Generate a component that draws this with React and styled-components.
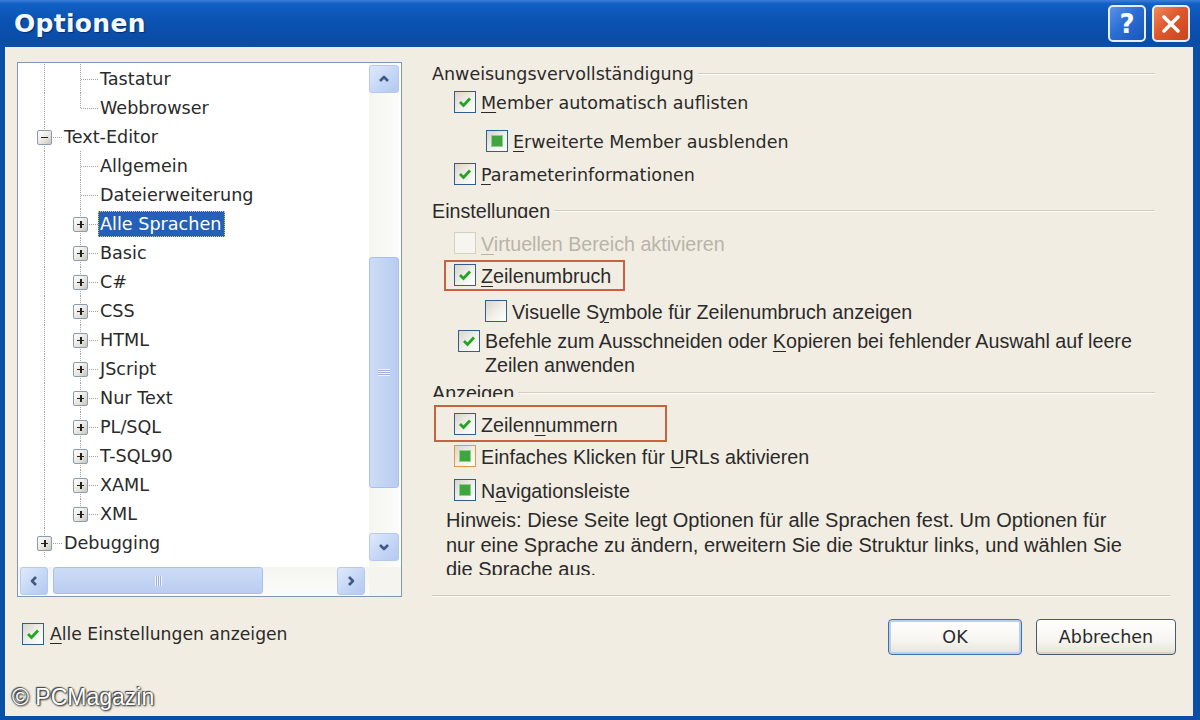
import React from "react";
import styled, { createGlobalStyle } from "styled-components";

const GlobalStyle = createGlobalStyle`
  html, body {
    margin: 0;
    padding: 0;
    width: 1200px;
    height: 720px;
    overflow: hidden;
  }
  * { box-sizing: border-box; }
`;

const WIDE = `"DejaVu Sans", Verdana, sans-serif`;
const NARROW = `"Liberation Sans", Arial, sans-serif`;

const Window = styled.div`
    position: relative;
    width: 1200px;
    height: 720px;
    display: flex;
    flex-direction: column;
    background: #0b4ea6;
    padding: 0 7px 4px 5px;
    color: #2a2a2a;
`;

const TitleBar = styled.div`
    height: 47px;
    margin: 0 -7px 0 -5px;
    display: flex;
    align-items: center;
    justify-content: space-between;
    padding: 0 10px 0 14px;
    background: linear-gradient(#3d7fd8 0%, #1160c4 8%, #0b52b2 45%, #0a4ca6 90%, #0d4fa6 100%);
`;

const TitleText = styled.div`
    font-family: ${WIDE};
    font-weight: bold;
    font-size: 25px;
    color: #f4f8ff;
    text-shadow: 1px 1px 1px #0a2c6a;
    letter-spacing: 0.3px;
`;

const CaptionButtons = styled.div`
    display: flex;
    gap: 6px;
`;

const CaptionButton = styled.div`
    width: 38px;
    height: 37px;
    border: 2px solid #e8eef8;
    border-radius: 5px;
    display: flex;
    align-items: center;
    justify-content: center;
    color: #fff;
    font-family: ${WIDE};
    font-weight: bold;
    font-size: 26px;
    background: ${p => p.$close
        ? "linear-gradient(135deg, #f08a5e 0%, #e0582d 45%, #c9431c 100%)"
        : "linear-gradient(135deg, #5b92e8 0%, #2a6fd6 45%, #1a55b8 100%)"};
`;

const Body = styled.div`
    flex: 1;
    background: #f2ede2;
    display: flex;
    flex-direction: column;
    padding: 15px 17px 0 12px;
`;

const MainRow = styled.div`
    display: flex;
    height: 535px;
`;

/* ---------- tree ---------- */

const TreeFrame = styled.div`
    width: 385px;
    height: 100%;
    border: 1px solid #8196b4;
    background: #fff;
    display: grid;
    grid-template-columns: 1fr 32px;
    grid-template-rows: 1fr 29px;
`;

const TreeList = styled.div`
    overflow: hidden;
    padding: 1px 0 0 8px;
    font-family: ${WIDE};
    font-size: 17.6px;
`;

const TreeRow = styled.div`
    height: 29px;
    display: flex;
    align-items: center;
`;

const GuideCell = styled.div`
    width: 36px;
    height: 100%;
    flex: none;
    position: relative;
    &::before {
        content: "";
        position: absolute;
        left: 18px;
        top: 0;
        bottom: 0;
        border-left: 1px dotted ${p => (p.$line ? "#a2a2a2" : "transparent")};
    }
`;

const BranchCell = styled.div`
    width: 36px;
    height: 100%;
    flex: none;
    position: relative;
    display: flex;
    align-items: center;
    &::before {
        content: "";
        position: absolute;
        left: 18px;
        top: 0;
        bottom: ${p => (p.$last ? "50%" : "0")};
        border-left: 1px dotted #a2a2a2;
    }
    &::after {
        content: "";
        position: absolute;
        left: 19px;
        right: 0;
        top: 50%;
        border-top: 1px dotted #a2a2a2;
    }
`;

const Expander = styled.span`
    position: absolute;
    z-index: 1;
    left: 11px;
    top: 50%;
    margin-top: -7px;
    width: 15px;
    height: 15px;
    border: 1px solid #8a9bb0;
    border-radius: 2px;
    background: linear-gradient(135deg, #ffffff 0%, #e6e4dc 60%, #c8c5b8 100%);
    &::before {
        content: "";
        position: absolute;
        left: 3px;
        right: 3px;
        top: 6px;
        height: 1.6px;
        background: #222;
    }
    &::after {
        content: "";
        display: ${p => (p.$open ? "none" : "block")};
        position: absolute;
        top: 3px;
        bottom: 3px;
        left: 6px;
        width: 1.6px;
        background: #222;
    }
`;

const TreeLabel = styled.span`
    height: 26px;
    line-height: 24px;
    padding: 0 3px 0 1px;
    white-space: nowrap;
    color: ${p => (p.$selected ? "#fff" : "#2a2a2a")};
    background: ${p => (p.$selected ? "#2560b8" : "transparent")};
    border: 1px dotted ${p => (p.$selected ? "#d9c27a" : "transparent")};
`;

const VScroll = styled.div`
    margin-right: 2px;
    display: flex;
    flex-direction: column;
    background: linear-gradient(90deg, #f4f4f0, #fcfcfa);
    padding-top: 2px;
`;

const HScroll = styled.div`
    display: flex;
    align-items: center;
    background: linear-gradient(#f4f4f0, #fcfcfa);
    padding: 0 0 2px 2px;
`;

const Corner = styled.div`
    background: #f6f4ee;
`;

const ScrollButton = styled.div`
    width: ${p => (p.$h ? "28px" : "30px")};
    height: 28px;
    flex: none;
    border: 1px solid #b6c8ec;
    border-radius: 3px;
    background: linear-gradient(135deg, #dfe9fb 0%, #c3d5f5 60%, #b4c9f0 100%);
    display: flex;
    align-items: center;
    justify-content: center;
    margin-left: ${p => (p.$end && p.$h ? "auto" : "0")};
    margin-right: ${p => (p.$end && p.$h ? "4px" : "0")};
    margin-top: ${p => (p.$end && !p.$h ? "auto" : "0")};
    margin-bottom: ${p => (p.$end && !p.$h ? "6px" : "0")};
`;

const Thumb = styled.div`
    flex: none;
    border: 1px solid #a9c0e8;
    border-radius: 3px;
    background: ${p => (p.$h
        ? "linear-gradient(#cddcf6, #b9cdf0)"
        : "linear-gradient(90deg, #cddcf6, #b9cdf0)")};
    display: flex;
    align-items: center;
    justify-content: center;
`;

const Grip = styled.span`
    display: block;
    width: ${p => (p.$h ? "7px" : "12px")};
    height: ${p => (p.$h ? "10px" : "7px")};
    background: ${p => (p.$h
        ? "repeating-linear-gradient(90deg, #eef3fc 0 1px, #9db3da 1px 2px)"
        : "repeating-linear-gradient(#eef3fc 0 1px, #9db3da 1px 2px)")};
`;

const Chevron = ({ dir }) => {
    const pts = {
        up: "4,10 8,6 12,10",
        down: "4,6 8,10 12,6",
        left: "10,4 6,8 10,12",
        right: "6,4 10,8 6,12",
    }[dir];
    return (
        <svg width="16" height="16" viewBox="0 0 16 16">
            <polyline points={pts} fill="none" stroke="#3f5a86" strokeWidth="2.6" strokeLinejoin="round" />
        </svg>
    );
};

/* ---------- options ---------- */

const OptionsPanel = styled.div`
    width: 738px;
    margin-left: 30px;
    display: flex;
    flex-direction: column;
`;

const GroupHeader = styled.div`
    height: 24px;
    margin-top: ${p => p.$mt || 0}px;
    padding-right: 15px;
    display: flex;
    align-items: center;
    gap: 4px;
    font-family: ${p => (p.$narrow ? NARROW : WIDE)};
    font-size: ${p => (p.$narrow ? "19.7px" : "17.5px")};
`;

const HeaderText = styled.span`
    line-height: 24px;
    white-space: nowrap;
    align-self: flex-start;
    max-height: ${p => (p.$clip ? `${p.$clip}px` : "none")};
    overflow: hidden;
`;

const Rule = styled.span`
    flex: 1;
    height: 2px;
    border-top: 1px solid #d2cdc0;
    border-bottom: 1px solid #fdfcfa;
`;

const OptRow = styled.div`
    position: relative;
    min-height: 30px;
    margin-top: ${p => p.$mt || 0}px;
    padding-left: ${p => p.$indent}px;
    display: flex;
    align-items: ${p => (p.$top ? "flex-start" : "center")};
    gap: 5px;
    font-family: ${p => (p.$narrow ? NARROW : WIDE)};
    font-size: ${p => (p.$narrow ? "19.7px" : "17.5px")};
    color: ${p => (p.$disabled ? "#b8b4a8" : "#2a2a2a")};
`;

const OptText = styled.span`
    line-height: 24px;
    white-space: nowrap;
    padding-top: ${p => (p.$top ? "0" : "1px")};
`;

const Mn = styled.u`
    text-decoration-thickness: 1px;
    text-underline-offset: 3px;
`;

const Box = styled.span`
    width: 22px;
    height: 22px;
    flex: none;
    margin-top: ${p => (p.$top ? "1px" : "0")};
    display: inline-flex;
    align-items: center;
    justify-content: center;
    border: 1.5px solid ${p => (p.$state === "disabled" ? "#d4d0c2" : p.$hover ? "#e39a3a" : "#2f5f8f")};
    background: ${p => (p.$state === "disabled"
        ? "#f7f5ef"
        : "linear-gradient(135deg, #d8d6cc 0%, #f1f0ea 55%, #ffffff 100%)")};
`;

const Mixed = styled.span`
    width: 12px;
    height: 12px;
    background: #3fa63f;
    border: 1px solid #8fd08f;
`;

const Checkbox = ({ state = "checked", hover, top }) => (
    <Box $state={state} $hover={hover} $top={top}>
        {state === "checked" && (
            <svg width="16" height="16" viewBox="0 0 16 16">
                <polyline points="3,8 6.5,11.5 13,4.5" fill="none" stroke="#23a523" strokeWidth="2.8" />
            </svg>
        )}
        {state === "mixed" && <Mixed />}
    </Box>
);

const Highlight = styled.span`
    position: absolute;
    left: ${p => p.$l}px;
    top: ${p => p.$t}px;
    width: ${p => p.$w}px;
    height: ${p => p.$h}px;
    border: 2px solid #c7623f;
    pointer-events: none;
`;

const Hint = styled.div`
    margin-top: 3px;
    padding-left: 14px;
    height: 67px;
    overflow: hidden;
    font-family: ${NARROW};
    font-size: 20px;
    line-height: 24.5px;
    color: #2a2a2a;
`;

const Separator = styled.div`
    margin-top: auto;
    height: 2px;
    border-top: 1px solid #cdc8bb;
    border-bottom: 1px solid #fdfcfa;
`;

/* ---------- footer ---------- */

const Footer = styled.div`
    margin-top: 22px;
    height: 36px;
    display: flex;
    align-items: center;
    padding-left: 5px;
`;

const FooterCheck = styled.div`
    display: flex;
    align-items: center;
    gap: 6px;
    margin-top: -6px;
    font-family: ${WIDE};
    font-size: 17.2px;
`;

const Buttons = styled.div`
    margin-left: auto;
    display: flex;
    gap: 14px;
`;

const XPButton = styled.button`
    width: ${p => p.$w}px;
    height: 36px;
    border-radius: 4px;
    border: 1.5px solid ${p => (p.$default ? "#3f6ea8" : "#4a5a6e")};
    box-shadow: ${p => (p.$default ? "inset 0 0 0 2px #b9cff0" : "inset 0 -2px 0 #d8d4c8")};
    background: linear-gradient(#ffffff 0%, #f6f5f0 60%, #e6e3d8 100%);
    font-family: ${WIDE};
    font-size: 17.5px;
    color: #2a2a2a;
    padding: 0;
`;

const Watermark = styled.div`
    position: absolute;
    left: 12px;
    bottom: 9px;
    font-family: ${NARROW};
    font-size: 23px;
    color: #fff;
    text-shadow: 0 0 2px #333, 1px 1px 2px #222, -1px -1px 1px #444;
`;

const tree = [
    { label: "Tastatur", level: 1 },
    { label: "Webbrowser", level: 1, last: true },
    { label: "Text-Editor", level: 0, toggle: "open" },
    { label: "Allgemein", level: 1 },
    { label: "Dateierweiterung", level: 1 },
    { label: "Alle Sprachen", level: 1, toggle: "closed", selected: true },
    { label: "Basic", level: 1, toggle: "closed" },
    { label: "C#", level: 1, toggle: "closed" },
    { label: "CSS", level: 1, toggle: "closed" },
    { label: "HTML", level: 1, toggle: "closed" },
    { label: "JScript", level: 1, toggle: "closed" },
    { label: "Nur Text", level: 1, toggle: "closed" },
    { label: "PL/SQL", level: 1, toggle: "closed" },
    { label: "T-SQL90", level: 1, toggle: "closed" },
    { label: "XAML", level: 1, toggle: "closed" },
    { label: "XML", level: 1, toggle: "closed", last: true },
    { label: "Debugging", level: 0, toggle: "closed" },
];

const Tree = () => (
    <TreeFrame>
        <TreeList>
            {tree.map(item => (
                <TreeRow key={item.label}>
                    {item.level === 1 && <GuideCell $line />}
                    <BranchCell $last={item.last}>
                        {item.toggle && <Expander $open={item.toggle === "open"} />}
                    </BranchCell>
                    <TreeLabel $selected={item.selected}>{item.label}</TreeLabel>
                </TreeRow>
            ))}
        </TreeList>
        <VScroll>
            <ScrollButton><Chevron dir="up" /></ScrollButton>
            <Thumb style={{ marginTop: 164, height: 231 }}><Grip /></Thumb>
            <ScrollButton $end><Chevron dir="down" /></ScrollButton>
        </VScroll>
        <HScroll>
            <ScrollButton $h><Chevron dir="left" /></ScrollButton>
            <Thumb $h style={{ marginLeft: 5, width: 210, height: 27 }}><Grip $h /></Thumb>
            <ScrollButton $h $end><Chevron dir="right" /></ScrollButton>
        </HScroll>
        <Corner />
    </TreeFrame>
);

const App = () => (
    <Window>
        <GlobalStyle />
        <TitleBar>
            <TitleText>Optionen</TitleText>
            <CaptionButtons>
                <CaptionButton>?</CaptionButton>
                <CaptionButton $close>
                    <svg width="22" height="22" viewBox="0 0 22 22">
                        <path d="M4 4 L18 18 M18 4 L4 18" stroke="#fff" strokeWidth="3.6" strokeLinecap="round" />
                    </svg>
                </CaptionButton>
            </CaptionButtons>
        </TitleBar>
        <Body>
            <MainRow>
                <Tree />
                <OptionsPanel>
                    <GroupHeader>
                        <HeaderText>Anweisungsvervollständigung</HeaderText>
                        <Rule />
                    </GroupHeader>
                    <OptRow $mt={1} $indent={22}>
                        <Checkbox />
                        <OptText><Mn>M</Mn>ember automatisch auflisten</OptText>
                    </OptRow>
                    <OptRow $mt={9} $indent={54}>
                        <Checkbox state="mixed" />
                        <OptText><Mn>E</Mn>rweiterte Member ausblenden</OptText>
                    </OptRow>
                    <OptRow $mt={3} $indent={22}>
                        <Checkbox />
                        <OptText><Mn>P</Mn>arameterinformationen</OptText>
                    </OptRow>

                    <GroupHeader $mt={10} $narrow>
                        <HeaderText $clip={19}>Einstellungen</HeaderText>
                        <Rule />
                    </GroupHeader>
                    <OptRow $mt={5} $indent={22} $narrow $disabled>
                        <Checkbox state="disabled" />
                        <OptText><Mn>V</Mn>irtuellen Bereich aktivieren</OptText>
                    </OptRow>
                    <OptRow $mt={2} $indent={22} $narrow>
                        <Checkbox />
                        <OptText><Mn>Z</Mn>eilenumbruch</OptText>
                        <Highlight $l={12} $t={0} $w={181} $h={31} />
                    </OptRow>
                    <OptRow $mt={6} $indent={53} $narrow>
                        <Checkbox state="empty" />
                        <OptText>Visuelle S<Mn>y</Mn>mbole für Zeilenumbruch anzeigen</OptText>
                    </OptRow>
                    <OptRow $mt={3} $indent={26} $narrow $top>
                        <Checkbox top />
                        <OptText $top>
                            Befehle zum Ausschneiden oder <Mn>K</Mn>opieren bei fehlender Auswahl auf leere<br />
                            Zeilen anwenden
                        </OptText>
                    </OptRow>

                    <GroupHeader $mt={4} $narrow>
                        <HeaderText $clip={16}>Anzeigen</HeaderText>
                        <Rule />
                    </GroupHeader>
                    <OptRow $mt={4} $indent={22} $narrow>
                        <Checkbox />
                        <OptText>Zeilen<Mn>n</Mn>ummern</OptText>
                        <Highlight $l={2} $t={-4} $w={233} $h={37} />
                    </OptRow>
                    <OptRow $mt={2} $indent={22} $narrow>
                        <Checkbox state="mixed" hover />
                        <OptText>Einfaches Klicken für <Mn>U</Mn>RLs aktivieren</OptText>
                    </OptRow>
                    <OptRow $mt={4} $indent={22} $narrow>
                        <Checkbox state="mixed" />
                        <OptText>N<Mn>a</Mn>vigationsleiste</OptText>
                    </OptRow>
                    <Hint>
                        Hinweis: Diese Seite legt Optionen für alle Sprachen fest. Um Optionen für<br />
                        nur eine Sprache zu ändern, erweitern Sie die Struktur links, und wählen Sie<br />
                        die Sprache aus.
                    </Hint>
                    <Separator />
                </OptionsPanel>
            </MainRow>
            <Footer>
                <FooterCheck>
                    <Checkbox />
                    <span><Mn>A</Mn>lle Einstellungen anzeigen</span>
                </FooterCheck>
                <Buttons>
                    <XPButton $default $w={134}>OK</XPButton>
                    <XPButton $w={140}>Abbrechen</XPButton>
                </Buttons>
            </Footer>
        </Body>
        <Watermark>© PCMagazin</Watermark>
    </Window>
);

export default App;
